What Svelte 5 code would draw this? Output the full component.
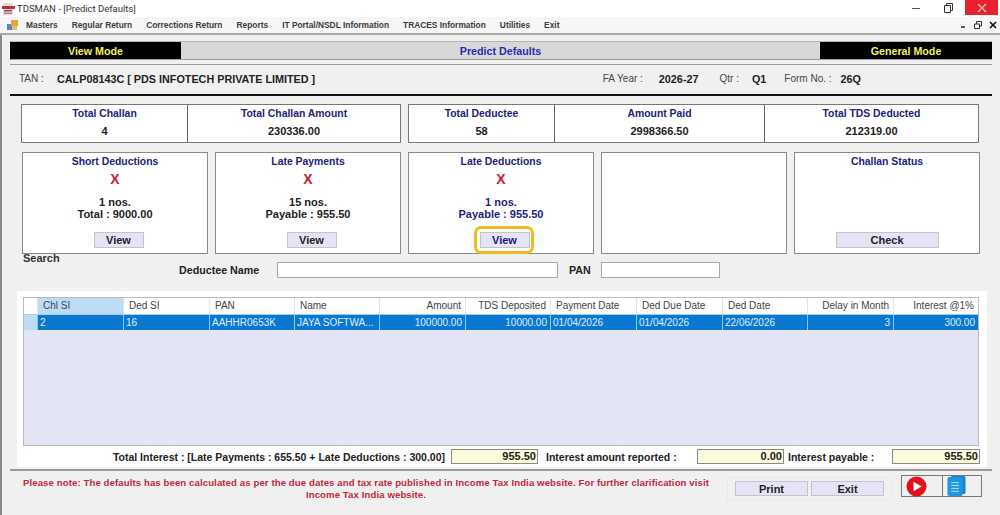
<script>
  const menu = ['Masters','Regular Return','Corrections Return','Reports','IT Portal/NSDL Information','TRACES Information','Utilities','Exit'];
  const statsA = [['Total Challan','4',165],['Total Challan Amount','230336.00',213]];
  const statsB = [['Total Deductee','58',145],['Amount Paid','2998366.50',210],['Total TDS Deducted','212319.00',214]];
  const cols = [
    ['Chl SI','2',86,'l'],['Ded SI','16',86,'l'],['PAN','AAHHR0653K',85,'l'],['Name','JAYA SOFTWA...',85,'l'],
    ['Amount','100000.00',86,'r'],['TDS Deposited','10000.00',85,'r'],['Payment Date','01/04/2026',86,'l'],
    ['Ded Due Date','01/04/2026',86,'l'],['Ded Date','22/06/2026',85,'l'],['Delay in Month','3',86,'r'],['Interest @1%','300.00',85,'r']
  ];
</script>

<div class="app">
  <header class="titlebar">
    <svg class="appicon" width="13" height="12" viewBox="0 0 13 12">
      <rect x="1" y="0" width="10" height="12" fill="#e9dcdc"/>
      <rect x="0" y="3" width="13" height="3" fill="#b8323a"/>
      <rect x="2" y="7" width="8" height="1.5" fill="#8a5a5a"/>
      <rect x="2" y="9.5" width="8" height="1.5" fill="#b98080"/>
    </svg>
    <span class="title">TDSMAN - [Predict Defaults]</span>
    <div class="winctl">
      <svg width="8" height="10" viewBox="0 0 8 10" class="min"><path d="M0 5.500h8" stroke="#555" fill="none"/></svg>
      <svg width="9" height="10" viewBox="0 0 9 10" class="max"><path d="M.5 2.500h6v7h-6zM2.500 2.500v-2h6v7h-1.500" stroke="#333" fill="none"/></svg>
      <div class="close"><svg width="10" height="10" viewBox="0 0 10 10"><path d="M1 1l8 8M9 1l-8 8" stroke="#f7c9cc" stroke-width="1.100"/></svg></div>
    </div>
  </header>

  <nav class="menubar">
    <svg class="menuicon" width="11" height="11" viewBox="0 0 11 11">
      <rect x="0" y="4" width="5" height="6" fill="#5b83c9"/>
      <rect x="4" y="0" width="7" height="6" fill="#e8a33c"/>
      <rect x="5" y="6" width="5" height="4" fill="#d9c37a"/>
    </svg>
    {#each menu as m}<span>{m}</span>{/each}
    <div class="mdi">
      <svg width="6" height="6" viewBox="0 0 6 6"><path d="M0 5h4" stroke="#222" stroke-width="1.500"/></svg>
      <svg width="8" height="8" viewBox="0 0 8 8"><path d="M.5 3h5v4.500h-5zM2.500 3v-2.500h5v4.500h-2" stroke="#333" fill="none"/></svg>
      <svg width="8" height="8" viewBox="0 0 8 8"><path d="M1 1l6 6M7 1l-6 6" stroke="#111" stroke-width="1.600"/></svg>
    </div>
  </nav>

  <main class="main">
    <div class="modebar">
      <div class="mode">View Mode</div>
      <div class="modetitle">Predict Defaults</div>
      <div class="mode">General Mode</div>
    </div>

    <div class="tanrow">
      <div class="tanleft"><span class="lbl">TAN :</span><b>CALP08143C [ PDS INFOTECH PRIVATE LIMITED ]</b></div>
      <div class="tanright">
        <span class="lbl">FA Year :</span><b class="fa">2026-27</b>
        <span class="lbl">Qtr :</span><b class="q">Q1</b>
        <span class="lbl">Form No. :</span><b>26Q</b>
      </div>
    </div>

    <section class="stats">
      <div class="statgroup">
        {#each statsA as s}
          <div class="stat" style="width:{s[2]}px"><div class="navy">{s[0]}</div><div class="val">{s[1]}</div></div>
        {/each}
      </div>
      <div class="statgroup">
        {#each statsB as s}
          <div class="stat" style="width:{s[2]}px"><div class="navy">{s[0]}</div><div class="val">{s[1]}</div></div>
        {/each}
      </div>
    </section>

    <section class="cards">
      <div class="card">
        <div class="navy">Short Deductions</div><div class="x">X</div>
        <div class="info">1 nos.<br/>Total : 9000.00</div>
        <button class="btn view">View</button>
      </div>
      <div class="card">
        <div class="navy">Late Payments</div><div class="x">X</div>
        <div class="info">15 nos.<br/>Payable : 955.50</div>
        <button class="btn view">View</button>
      </div>
      <div class="card">
        <div class="navy">Late Deductions</div><div class="x">X</div>
        <div class="info blue">1 nos.<br/>Payable : 955.50</div>
        <button class="btn view active">View</button>
      </div>
      <div class="card"></div>
      <div class="card">
        <div class="navy">Challan Status</div>
        <button class="btn check">Check</button>
      </div>
    </section>

    <section class="search">
      <div class="searchtitle">Search</div>
      <div class="searchrow">
        <label class="l1" for="dn">Deductee Name</label><input id="dn" class="i1" />
        <label class="l2" for="pn">PAN</label><input id="pn" class="i2" />
      </div>
    </section>

    <section class="lower">
      <div class="grid">
        <div class="ghead">
          <div class="corner"></div>
          {#each cols as c, i}
            <div class="hc {c[3]}" class:sel={i === 0} style="width:{c[2]}px">{c[0]}</div>
          {/each}
        </div>
        <div class="grow">
          <div class="rowhead"></div>
          {#each cols as c}
            <div class="rc {c[3]}" style="width:{c[2]}px">{c[1]}</div>
          {/each}
        </div>
      </div>
      <div class="totals">
        <span class="tlabel t1">Total Interest : [Late Payments : 655.50 + Late Deductions : 300.00]</span>
        <div class="amt a1">955.50</div>
        <span class="tlabel t2">Interest amount reported :</span>
        <div class="amt a2">0.00</div>
        <span class="tlabel t3">Interest payable :</span>
        <div class="amt a3">955.50</div>
      </div>
    </section>

    <footer class="foot">
      <p class="note">Please note: The defaults has been calculated as per the due dates and tax rate published in Income Tax India website. For further clarification visit<br/>Income Tax India website.</p>
      <div class="actions">
        <button class="btn act">Print</button>
        <button class="btn act">Exit</button>
      </div>
      <div class="iconbox">
        <div class="ib">
          <svg width="21" height="21" viewBox="0 0 21 21"><circle cx="10.500" cy="10.500" r="10" fill="#e3111c"/><path d="M7.500 5.800l8 4.700-8 4.700z" fill="#fff"/></svg>
        </div>
        <div class="ib">
          <svg width="19" height="20" viewBox="0 0 19 21">
            <path d="M4 0h13a2 2 0 0 1 2 2v15a2 2 0 0 1-2 2H4z" fill="#1f7fd0"/>
            <rect x="0" y="1" width="16" height="20" rx="2" fill="#1e96e2"/>
            <path d="M4 7h8M4 10h8M4 13h8M4 16h8" stroke="#bfe3fa" stroke-width="1"/>
          </svg>
        </div>
      </div>
    </footer>
  </main>
</div>

<style>
  :global(body) { margin: 0; background: #f0f0f0; }
  .app {
    width: 1000px; height: 515px; overflow: hidden; display: flex; flex-direction: column;
    font-family: "Liberation Sans", Arial, sans-serif; font-size: 11px; color: #111; background: #f0f0f0;
  }
  .titlebar { height: 17px; flex: none; background: #fff; display: flex; align-items: center; padding-left: 2px; }
  .appicon { margin-right: 2px; }
  .title { font-family: Roboto, sans-serif; font-size: 9.500px; color: #333; }
  .winctl { margin-left: auto; display: flex; align-items: center; height: 15px; align-self: flex-start; padding-right: 2px; }
  .min { margin-right: 24px; }
  .max { margin-right: 12px; }
  .close { width: 33px; height: 15px; background: #e8212d; display: flex; align-items: center; justify-content: center; }

  .menubar {
    height: 16px; flex: none; background: #f6f6f6; border-bottom: 2px solid #a8a8a8; display: flex; align-items: center;
    padding-left: 7px; font-size: 8.400px; font-weight: bold; color: #3c3c3c; gap: 14px;
  }
  .menuicon { margin-right: -6px; }
  .mdi { margin-left: auto; display: flex; align-items: center; gap: 7px; padding-right: 3px; }

  .main { flex: 1; min-height: 0; border-left: 2px solid #8a8a8a; padding: 7px 8px 0 8px; display: flex; flex-direction: column; }

  .modebar {
    display: grid; grid-template-columns: 171px 1fr 172px; height: 17px; background: #d8d8d8; flex: none;
    box-shadow: 0 1px 0 #9a9a9a, 0 -1px 0 #b5b5b5; font-size: 10.700px;
  }
  .mode { background: #000; color: #f2f25a; font-weight: bold; display: flex; align-items: center; justify-content: center; }
  .modetitle { color: #2b2bb0; font-weight: bold; display: flex; align-items: center; justify-content: center; }

  .tanrow {
    margin-top: 5px; border-top: 1px solid #9a9a9a; height: 27px; border-bottom: 2px solid #111; display: flex; flex: none;
    align-items: center; justify-content: space-between; padding: 0 0 2px 9px;
  }
  .tanleft { display: flex; align-items: center; }
  .tanleft .lbl { width: 38px; }
  .lbl { color: #444; font-size: 10px; }
  .tanrow b { color: #222; font-size: 10.800px; }
  .tanright { display: flex; align-items: center; padding-right: 131px; }
  .fa { margin: 0 21px 0 16px; }
  .q { margin: 0 18px 0 13px; }
  .tanright .lbl:last-of-type { margin-right: 9px; }

  .stats { display: flex; gap: 7px; margin: 8px 0 0 11px; flex: none; }
  .statgroup { display: flex; border: 1px solid #777; background: #fff; height: 37px; }
  .stat { display: flex; flex-direction: column; align-items: center; border-left: 1px solid #666; box-sizing: border-box; }
  .stat:first-child { border-left: 0; }
  .navy { color: #22227c; font-weight: bold; line-height: 13px; padding-top: 2px; font-size: 10.400px; }
  .val { margin-top: 5px; color: #222; font-weight: bold; line-height: 13px; font-size: 11px; }

  .cards { display: grid; grid-template-columns: repeat(5, 186px); gap: 7px; margin: 9px 0 0 12px; flex: none; }
  .card { height: 102px; border: 1px solid #8a8a8a; background: #fff; box-sizing: border-box; display: flex; flex-direction: column; align-items: center; position: relative; }
  .x { color: #c8202a; font-weight: bold; font-size: 14px; line-height: 16px; margin-top: 3px; }
  .info { margin-top: 9px; text-align: center; line-height: 12px; font-weight: bold; color: #222; }
  .info.blue { color: #1c1c85; }
  .btn {
    font-family: inherit; font-weight: bold; font-size: 11px; background: #e4e4f6; border: 1px solid #c4c4c8; padding: 0; color: #222;
    height: 16px; box-sizing: border-box; display: block;
  }
  .view { width: 50px; margin-left: 7px; position: absolute; bottom: 5px; }
  .card .check { width: 103px; position: absolute; bottom: 5px; }
  .active { color: #16168f; overflow: visible; }
  .active::after {
    content: ""; position: absolute; left: -7px; top: -7px; right: -5px; bottom: -7px;
    border: 3px solid #f2b81f; border-radius: 7px; pointer-events: none;
  }

  .search { margin: -1px 8px 0 6px; height: 38px; position: relative; box-sizing: border-box; flex: none; }
  .searchtitle { font-weight: bold; color: #333; line-height: 11px; padding-left: 7px; }
  .searchrow { display: flex; align-items: center; margin-top: -2px; height: 16px; }
  .searchrow label { font-weight: bold; color: #222; font-size: 10.700px; }
  .l1 { margin-left: 163px; width: 98px; }
  .l2 { margin-left: 11px; width: 32px; }
  input { box-sizing: border-box; height: 16px; background: #fff; border: 1px solid #a8a8a8; border-radius: 0; padding: 0; outline: 0; }
  .i1 { width: 281px; }
  .i2 { width: 119px; }

  .lower { margin: 0 5px 0 7px; height: 176px; background: #fff; padding: 6px 6px 0 6px; box-sizing: border-box; flex: none; }
  .grid { width: 956px; height: 149px; box-sizing: border-box; background: #e3e5f7; border: 1px solid #bcbcbc; }
  .ghead { display: flex; height: 16px; background: #fff; }
  .corner, .rowhead { width: 13px; flex: none; }
  .hc { box-sizing: border-box; font-size: 10px; color: #444; line-height: 16px; padding: 0 4px 0 5px; border-left: 1px solid #e4e4e4; flex: none; }
  .hc.sel { background: #bcdcf4; }
  .l { text-align: left; }
  .r { text-align: right; }
  .grow { display: flex; height: 16px; background: #0a78d0; border-top: 1px solid #9cd0ee; box-sizing: border-box; }
  .rowhead { background: #bcdcf4; }
  .rc { box-sizing: border-box; font-size: 10px; color: #dbeeff; line-height: 16px; padding: 0 3px 0 2px; border-left: 1px solid #8cc8ee; flex: none; overflow: hidden; white-space: nowrap; }

  .totals { display: flex; align-items: center; height: 15px; margin-top: 3px; }
  .tlabel { font-weight: bold; color: #222; white-space: nowrap; font-size: 10.500px; }
  .t1 { width: 422px; text-align: right; }
  .amt { box-sizing: border-box; height: 15px; background: #fbfbdc; border: 1px solid #8a8a8a; text-align: right; font-weight: bold; line-height: 13px; padding-right: 1px; color: #222; flex: none; }
  .a1 { width: 87px; margin-left: 6px; }
  .t2 { margin-left: 8px; width: 151px; }
  .a2 { width: 87px; }
  .t3 { margin-left: 4px; width: 104px; }
  .a3 { width: 88px; }

  .foot { border-top: 2px solid #9a9a9a; margin-top: 2px; display: flex; height: 44px; box-sizing: border-box; align-items: flex-start; flex: none; }
  .note { margin: 6px 0 0 12px; width: 688px; flex: none; color: #c02a3c; font-weight: bold; font-size: 9.600px; line-height: 12px; text-align: center; letter-spacing: .1px; white-space: nowrap; }
  .actions { margin: 6px 0 0 17px; display: flex; gap: 3px; padding: 3px 7px; border: 1px solid #e8e8e8; }
  .act { width: 73px; height: 15px; }
  .iconbox { margin: 4px 0 0 9px; display: flex; border: 1px solid #777; height: 22px; width: 81px; box-sizing: border-box; }
  .ib { width: 40px; box-sizing: border-box; padding-left: 4px; display: flex; align-items: center; }
  .ib + .ib { border-left: 1px solid #777; }
</style>
